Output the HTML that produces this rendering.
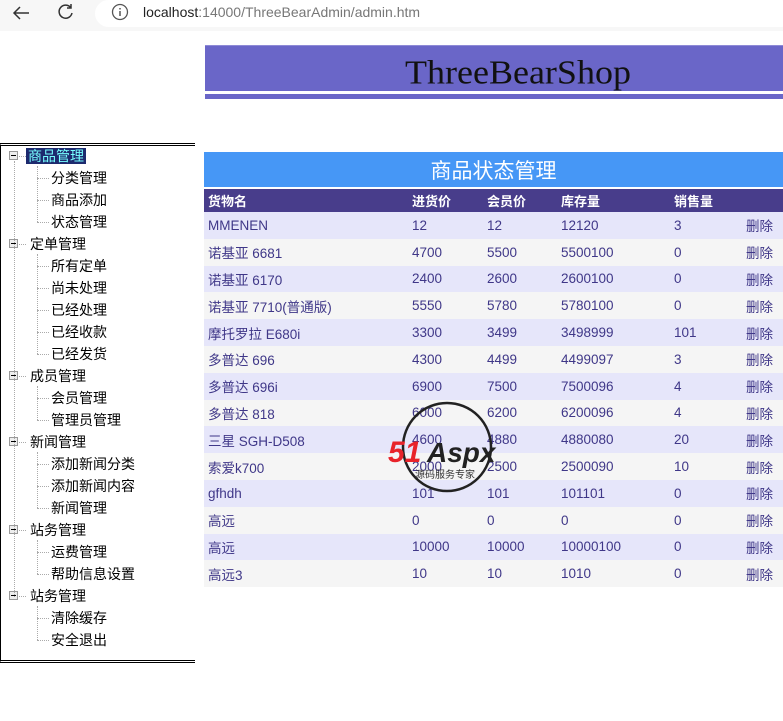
<!DOCTYPE html>
<html><head><meta charset="utf-8"><style>
*{margin:0;padding:0;box-sizing:border-box}
body{width:783px;height:721px;background:#fff;position:relative;overflow:hidden;font-family:"Liberation Sans","Noto Sans CJK SC",sans-serif}
.chrome{position:absolute;left:0;top:0;width:783px;height:31px;background:#f7f7f7}
.addr{position:absolute;left:95px;top:0;width:700px;height:27px;background:#fff;border-radius:14px}
.url{position:absolute;left:143px;top:4px;font-size:14px;color:#777}
.url b{font-weight:normal;color:#222}
.ban{position:absolute;left:205px;top:45px;width:578px;height:54px;background:#6a66c8;border-top:1px solid #8e8ad6}
.ban .w{position:absolute;left:0;top:45px;width:100%;height:3px;background:#fff}
.ban .t{position:absolute;left:24px;width:100%;top:5px;text-align:center;font-family:"Liberation Serif",serif;font-size:36px;color:#111;transform:scaleY(0.95)}
.tree{position:absolute;left:0;top:143px;width:195px;height:520px;border:1px solid #000;border-top:3px double #000;border-bottom:3px double #000;border-right:none}
.it{position:absolute;font-size:14px;line-height:20px;color:#000;white-space:nowrap}
.sel{background:#1d2a6e;color:#7ff;padding:0 2px}
.box{position:absolute;width:9px;height:9px;border:1px solid #999;background:#eee}
.box:after{content:"";position:absolute;left:1px;top:3px;width:5px;height:1px;background:#000}
.vl{position:absolute;border-left:1px dotted #aaa}
.hl{position:absolute;border-top:1px dotted #aaa;width:12px}
table{position:absolute;left:204px;top:152px;width:579px;border-collapse:collapse;font-size:13.5px}
td{height:26.8px;padding:0 0 0 4px;color:#3f3788;white-space:nowrap}
.tt td{height:36px;background:#4697f6;color:#fff;font-size:21px;text-align:center;border-bottom:2px solid #fff;padding-left:0}
.hd td{height:24px;background:#483d8b;color:#fff;font-weight:bold;font-size:13px}
tr.a td{background:#e6e6fa}tr.b td{background:#f5f5f5}
</style></head><body>
<div class="chrome"><div class="addr"></div>
<svg style="position:absolute;left:12px;top:5px" width="18" height="16"><path d="M17 8H2M8 2L2 8l6 6" stroke="#333" stroke-width="1.5" fill="none"/></svg>
<svg style="position:absolute;left:57px;top:3px" width="18" height="18"><path d="M14 5A6.5 6.5 0 1 0 15 10M14 1v4h-4" stroke="#333" stroke-width="1.5" fill="none"/></svg>
<svg style="position:absolute;left:111px;top:3px" width="18" height="18"><circle cx="9" cy="9" r="7.5" stroke="#555" fill="none" stroke-width="1.3"/><path d="M9 8v5M9 5v1.5" stroke="#555" stroke-width="1.5"/></svg>
<div class="url"><b>localhost</b>:14000/ThreeBearAdmin/admin.htm</div></div>
<div class="ban"><div class="t">ThreeBearShop</div><div class="w"></div></div>
<div class="tree"></div>
<div id="tr"></div>
<table>
<tr class="tt"><td colspan="6">商品状态管理</td></tr>
<tr class="hd"><td style="width:204px">货物名</td><td style="width:75px">进货价</td><td style="width:74px">会员价</td><td style="width:113px">库存量</td><td style="width:72px">销售量</td><td></td></tr>
<tr class="a"><td>MMENEN</td><td>12</td><td>12</td><td>12120</td><td>3</td><td>删除</td></tr>
<tr class="b"><td>诺基亚 6681</td><td>4700</td><td>5500</td><td>5500100</td><td>0</td><td>删除</td></tr>
<tr class="a"><td>诺基亚 6170</td><td>2400</td><td>2600</td><td>2600100</td><td>0</td><td>删除</td></tr>
<tr class="b"><td>诺基亚 7710(普通版)</td><td>5550</td><td>5780</td><td>5780100</td><td>0</td><td>删除</td></tr>
<tr class="a"><td>摩托罗拉 E680i</td><td>3300</td><td>3499</td><td>3498999</td><td>101</td><td>删除</td></tr>
<tr class="b"><td>多普达 696</td><td>4300</td><td>4499</td><td>4499097</td><td>3</td><td>删除</td></tr>
<tr class="a"><td>多普达 696i</td><td>6900</td><td>7500</td><td>7500096</td><td>4</td><td>删除</td></tr>
<tr class="b"><td>多普达 818</td><td>6000</td><td>6200</td><td>6200096</td><td>4</td><td>删除</td></tr>
<tr class="a"><td>三星 SGH-D508</td><td>4600</td><td>4880</td><td>4880080</td><td>20</td><td>删除</td></tr>
<tr class="b"><td>索爱k700</td><td>2000</td><td>2500</td><td>2500090</td><td>10</td><td>删除</td></tr>
<tr class="a"><td>gfhdh</td><td>101</td><td>101</td><td>101101</td><td>0</td><td>删除</td></tr>
<tr class="b"><td>高远</td><td>0</td><td>0</td><td>0</td><td>0</td><td>删除</td></tr>
<tr class="a"><td>高远</td><td>10000</td><td>10000</td><td>10000100</td><td>0</td><td>删除</td></tr>
<tr class="b"><td>高远3</td><td>10</td><td>10</td><td>1010</td><td>0</td><td>删除</td></tr>
</table>
<svg style="position:absolute;left:385px;top:400px" width="140" height="95">
<circle cx="62" cy="47" r="44" fill="none" stroke="#222" stroke-width="2.5"/>
<text x="3" y="62" font-family="Liberation Sans" font-style="italic" font-weight="bold" font-size="30" fill="#e8232a">51</text>
<text x="42" y="62" font-family="Liberation Sans" font-style="italic" font-weight="bold" font-size="28" fill="#222">Aspx</text>
<text x="30" y="78" font-family="Noto Sans CJK SC" font-size="10" fill="#333">源码服务专家</text>
</svg>
<script>
var L=[[1,"商品管理"],[2,"分类管理"],[2,"商品添加"],[2,"状态管理"],[1,"定单管理"],[2,"所有定单"],[2,"尚未处理"],[2,"已经处理"],[2,"已经收款"],[2,"已经发货"],[1,"成员管理"],[2,"会员管理"],[2,"管理员管理"],[1,"新闻管理"],[2,"添加新闻分类"],[2,"添加新闻内容"],[2,"新闻管理"],[1,"站务管理"],[2,"运费管理"],[2,"帮助信息设置"],[1,"站务管理"],[2,"清除缓存"],[2,"安全退出"]];
var h="";
L.forEach(function(e,i){var y=146+i*22;
if(e[0]==1){h+='<div class="box" style="left:9px;top:'+(y+5)+'px"></div><div class="hl" style="left:19px;top:'+(y+10)+'px;width:7px"></div>';
h+='<div class="it" style="left:'+(i==0?26:30)+'px;top:'+y+'px">'+(i==0?'<span class="sel">'+e[1]+'</span>':e[1])+'</div>';}
else{h+='<div class="hl" style="left:37px;top:'+(y+10)+'px"></div><div class="it" style="left:51px;top:'+y+'px">'+e[1]+'</div>';}
});
h+='<div class="vl" style="left:14px;top:161px;height:436px"></div>';
[[0,3],[4,9],[10,12],[13,16],[17,19],[20,22]].forEach(function(g){var a=146+g[0]*22+20,b=146+g[1]*22+10;h+='<div class="vl" style="left:37px;top:'+a+'px;height:'+(b-a)+'px"></div>';});
document.getElementById("tr").innerHTML=h;
</script>
</body></html>
